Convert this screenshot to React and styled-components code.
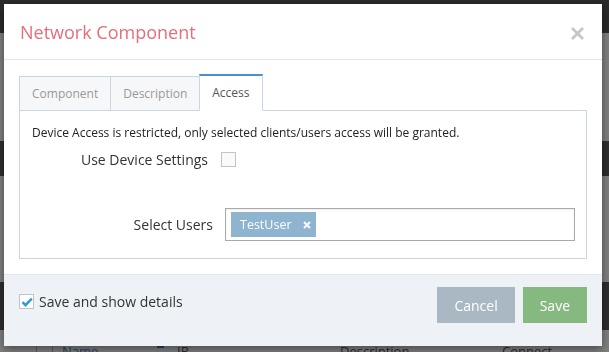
import React from "react";
import styled, { createGlobalStyle } from "styled-components";

const Global = createGlobalStyle`
  html, body { margin: 0; padding: 0; }
  body {
    font-family: "Open Sans", "Liberation Sans", Arial, sans-serif;
    background: #808080;
    overflow: hidden;
  }
  * { box-sizing: border-box; }
`;

const Page = styled.div`
  height: 100vh;
  display: flex;
  flex-direction: column;
  background: #808080;
`;
const TopBar = styled.div`
  height: 33px;
  flex: none;
  background: #2b2b2b;
`;
const Spacer = styled.div`
  height: ${(p) => p.$h}px;
  flex: none;
`;
const DarkBand = styled.div`
  height: ${(p) => p.$h}px;
  flex: none;
  background: #2e2e2e;
`;
const TableHead = styled.div`
  margin: 12px 0 0 36px;
  display: flex;
  border-left: 1px solid #5e5e5e;
  height: 24px;
`;
const SelectCol = styled.div`
  width: 16px;
  border-right: 1px solid #5e5e5e;
`;
const HeadCell = styled.div`
  position: relative;
  width: ${(p) => (p.$w ? `${p.$w}px` : "auto")};
  padding-left: 9px;
  font-size: 13px;
  line-height: 18px;
  color: ${(p) => (p.$link ? "#26406f" : "#2a2a2a")};
`;
const SortMark = styled.span`
  position: absolute;
  left: 104px;
  top: 4px;
  width: 7px;
  height: 2px;
  background: #26406f;
`;

/* ---------- modal ---------- */
const Overlay = styled.div`
  position: fixed;
  inset: 0;
  padding: 4px;
`;
const Modal = styled.div`
  width: 598px;
  background: #fff;
  box-shadow: 0 3px 9px rgba(0, 0, 0, 0.45);
  display: flex;
  flex-direction: column;
`;
const Header = styled.div`
  height: 56px;
  display: flex;
  align-items: center;
  justify-content: space-between;
  padding: 0 17px 0 16px;
  border-bottom: 1px solid #e5e5e5;
`;
const Title = styled.h4`
  margin: 0;
  font-weight: 400;
  font-size: 18px;
  line-height: 24px;
  color: #e46e7b;
`;
const CloseButton = styled.button`
  border: 0;
  background: none;
  padding: 0;
  margin-top: 4px;
  width: 15px;
  height: 15px;
  display: flex;
  cursor: pointer;
`;
const Body = styled.div`
  padding: 14px 15px 15px;
`;
const TabList = styled.div`
  display: flex;
  align-items: flex-end;
  position: relative;
  z-index: 1;
  margin-bottom: -1px;
`;
const Tab = styled.div`
  height: ${(p) => (p.$active ? 37 : 35)}px;
  padding: 0 12px;
  margin-left: ${(p) => (p.$first ? 0 : -1)}px;
  display: flex;
  align-items: center;
  font-size: 12px;
  line-height: 16px;
  color: ${(p) => (p.$active ? "#555" : "#999")};
  background: ${(p) => (p.$active ? "#fff" : "#f6f7f9")};
  border: 1px solid #c9d5e2;
  border-top: ${(p) => (p.$active ? "2px solid #4a8fc9" : "1px solid #c9d5e2")};
  border-bottom-color: ${(p) => (p.$active ? "#fff" : "#c9d5e2")};
  position: relative;
  z-index: ${(p) => (p.$active ? 2 : 1)};
`;
const Panel = styled.div`
  border: 1px solid #c9d5e2;
  padding: 14px 11px 17px 12px;
`;
const Notice = styled.p`
  margin: 0;
  font-size: 12px;
  line-height: 16px;
  color: #222;
`;
const FormRow = styled.div`
  display: flex;
  align-items: center;
  margin-top: ${(p) => p.$mt}px;
  gap: ${(p) => p.$gap}px;
`;
const Label = styled.label`
  width: ${(p) => p.$w}px;
  flex: none;
  text-align: right;
  font-size: 14px;
  line-height: 19px;
  color: #333;
`;
const Box = styled.span`
  width: 15px;
  height: 15px;
  flex: none;
  border: 1px solid #c4c4c4;
  background: ${(p) => (p.$white ? "#fff" : "#fafafa")};
  display: flex;
  align-items: center;
  justify-content: center;
`;
const TagInput = styled.div`
  width: 350px;
  height: 33px;
  border: 1px solid #a9a9a9;
  box-shadow: inset 0 1px 2px rgba(0, 0, 0, 0.08);
  padding: 3px 5px;
  display: flex;
  align-items: center;
`;
const Tag = styled.span`
  height: 25px;
  display: inline-flex;
  align-items: center;
  gap: 11px;
  padding: 0 5px 0 9px;
  background: #8fb4d0;
  color: #fff;
  font-size: 12.5px;
  line-height: 18px;
`;
const Footer = styled.div`
  height: 72px;
  background: #eef1f6;
  border-top: 1px solid #e3e7ed;
  padding: 12px 15px 0;
  display: flex;
  justify-content: space-between;
  align-items: flex-start;
`;
const CheckLabel = styled.label`
  margin-top: 5px;
  display: flex;
  align-items: center;
  gap: 5px;
  font-size: 14px;
  line-height: 19px;
  color: #333;
`;
const Buttons = styled.div`
  display: flex;
  gap: 8px;
`;
const Button = styled.button`
  height: 36px;
  padding: 0 17px;
  border: 0;
  border-radius: 0;
  font-family: inherit;
  font-size: 14px;
  color: #fff;
  background: ${(p) => (p.$primary ? "#86b97f" : "#aab8c3")};
  cursor: pointer;
`;

export default function App() {
  return (
    <>
      <Global />
      <Page>
        <TopBar />
        <Spacer $h={108} />
        <DarkBand $h={35} />
        <Spacer $h={106} />
        <DarkBand $h={48} />
        <TableHead>
          <SelectCol />
          <HeadCell $w={115} $link>
            Name
            <SortMark />
          </HeadCell>
          <HeadCell $w={163}>IP</HeadCell>
          <HeadCell $w={162}>Description</HeadCell>
          <HeadCell>Connect</HeadCell>
        </TableHead>
      </Page>
      <Overlay>
        <Modal>
          <Header>
            <Title>Network Component</Title>
            <CloseButton aria-label="Close">
              <svg width="15" height="15" viewBox="0 0 15 15">
                <path d="M2 2L13 13M13 2L2 13" stroke="#c6c6c6" strokeWidth="2.8" strokeLinecap="butt" />
              </svg>
            </CloseButton>
          </Header>
          <Body>
            <TabList>
              <Tab $first>Component</Tab>
              <Tab>Description</Tab>
              <Tab $active>Access</Tab>
            </TabList>
            <Panel>
              <Notice>Device Access is restricted, only selected clients/users access will be granted.</Notice>
              <FormRow $mt={9} $gap={13}>
                <Label $w={176}>Use Device Settings</Label>
                <Box />
              </FormRow>
              <FormRow $mt={39} $gap={12}>
                <Label $w={181}>Select Users</Label>
                <TagInput>
                  <Tag>
                    TestUser
                    <svg width="8" height="8" viewBox="0 0 8 8">
                      <path d="M1 1L7 7M7 1L1 7" stroke="#f4f6f9" strokeWidth="2.2" />
                    </svg>
                  </Tag>
                </TagInput>
              </FormRow>
            </Panel>
          </Body>
          <Footer>
            <CheckLabel>
              <Box $white>
                <svg width="12" height="12" viewBox="0 0 12 12">
                  <path d="M1.5 6.2L4.5 9.2L10.8 2.6" fill="none" stroke="#2f9bd6" strokeWidth="2.4" />
                </svg>
              </Box>
              Save and show details
            </CheckLabel>
            <Buttons>
              <Button>Cancel</Button>
              <Button $primary>Save</Button>
            </Buttons>
          </Footer>
        </Modal>
      </Overlay>
    </>
  );
}
